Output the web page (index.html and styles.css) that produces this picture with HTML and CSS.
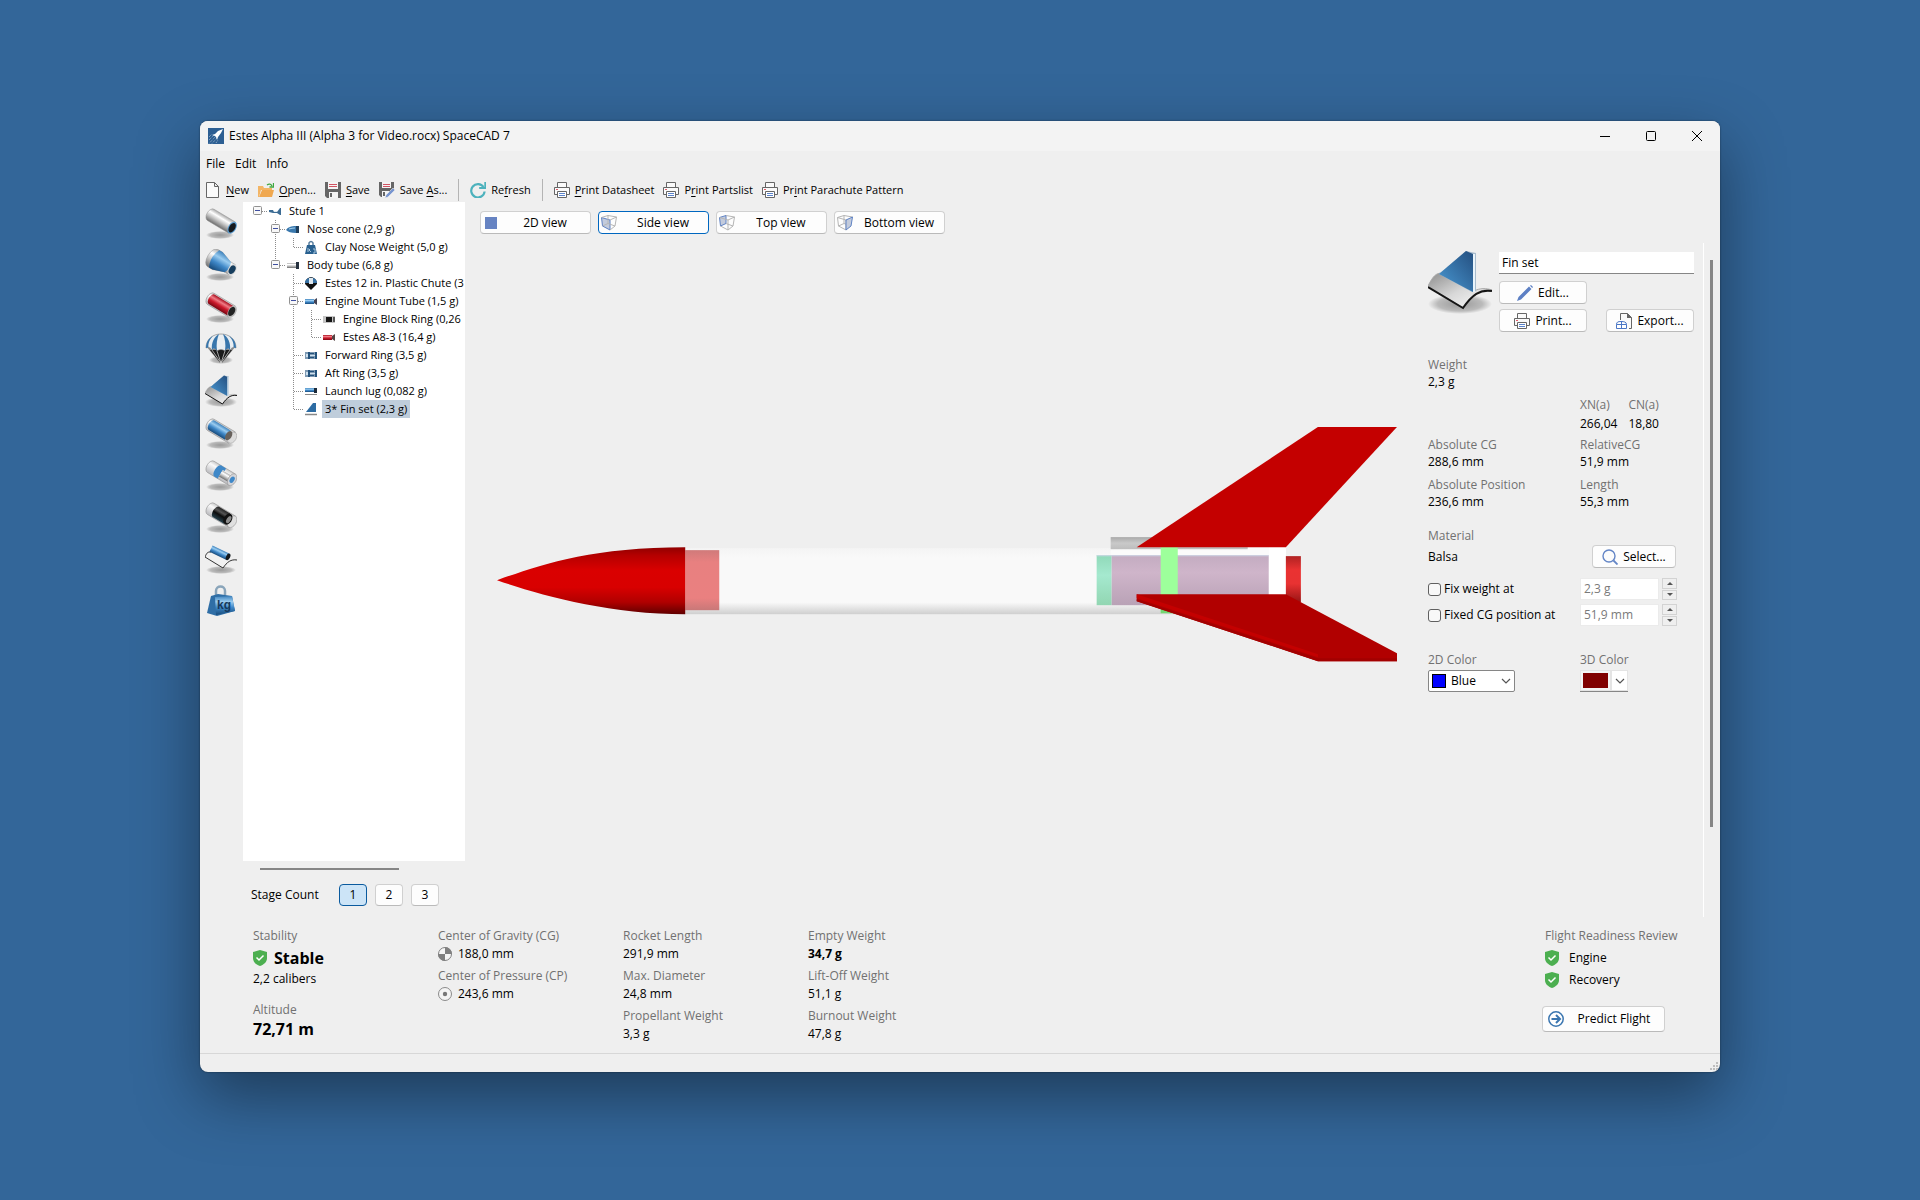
FILE: index.html
```html
<!DOCTYPE html>
<html lang="en">
<head>
<meta charset="utf-8">
<title>Estes Alpha III (Alpha 3 for Video.rocx) SpaceCAD 7</title>
<link rel="stylesheet" href="styles.css">
</head>
<body>
<svg class="sprite" aria-hidden="true">
  <defs>
    <linearGradient id="steel" x1="0" y1="0" x2="0" y2="1"><stop offset="0" stop-color="#a9a9a9"/><stop offset=".3" stop-color="#fff"/><stop offset=".6" stop-color="#c4c4c4"/><stop offset="1" stop-color="#6d6d6d"/></linearGradient>
    <linearGradient id="blue" x1="0" y1="0" x2="0" y2="1"><stop offset="0" stop-color="#3f83bd"/><stop offset=".3" stop-color="#9accf0"/><stop offset=".6" stop-color="#3f88c8"/><stop offset="1" stop-color="#174a7a"/></linearGradient>
    <linearGradient id="crimson" x1="0" y1="0" x2="0" y2="1"><stop offset="0" stop-color="#a80c1c"/><stop offset=".3" stop-color="#ef7c86"/><stop offset=".6" stop-color="#cc1a2c"/><stop offset="1" stop-color="#7a0713"/></linearGradient>
    <linearGradient id="coal" x1="0" y1="0" x2="0" y2="1"><stop offset="0" stop-color="#222"/><stop offset=".3" stop-color="#555"/><stop offset=".55" stop-color="#0c0c0c"/><stop offset="1" stop-color="#27414d"/></linearGradient>
    <linearGradient id="glass" x1="0" y1="0" x2="0" y2="1"><stop offset="0" stop-color="#c9c9c9"/><stop offset=".3" stop-color="#fafafa"/><stop offset="1" stop-color="#b9b9bd"/></linearGradient>
    <linearGradient id="fin" x1="0" y1="1" x2="1" y2="0"><stop offset="0" stop-color="#4a9ad4"/><stop offset="1" stop-color="#244f80"/></linearGradient>
    <linearGradient id="sheet" x1="0" y1="0" x2="1" y2="1"><stop offset="0" stop-color="#8d8d8d"/><stop offset=".5" stop-color="#d8d8d8"/><stop offset="1" stop-color="#fff"/></linearGradient>
    <radialGradient id="shade"><stop offset="0" stop-color="#000" stop-opacity=".36"/><stop offset=".7" stop-color="#000" stop-opacity=".22"/><stop offset="1" stop-color="#000" stop-opacity="0"/></radialGradient>
  </defs>
  <symbol id="app" viewBox="0 0 16 16"><rect width="16" height="16" fill="#2d5f93"/><path d="M1 15.500 8 8M1 12l5-5M4 15.500 9 10M1 9l3-3M8 15l2-3" stroke="#9db4cb" stroke-dasharray="1 1" fill="none"/><path d="M15 1 10 3 7 6l-3 1 3 1 1 1 1 3 1-3 3-4z" fill="#fff"/></symbol>
  <symbol id="new" viewBox="0 0 16 16"><path d="M1.500.5h8l4 4v11h-12zM9.500.5v4h4" fill="#fafafa" stroke="#666"/></symbol>
  <symbol id="open" viewBox="0 0 16 16"><path d="M0 15V4h5l1 2h8v2H3L1 15z" fill="#f3b565"/><path d="M1 15 4 8h12l-2 7z" fill="#f0a850"/><path d="M9 3c2-1.500 4-1 5 1M15.500 1v4h-4" fill="none" stroke="#3fa83f" stroke-width="1.300"/></symbol>
  <symbol id="save" viewBox="0 0 16 16"><path d="M0 0h16v16H2l-2-2z" fill="#666"/><path d="M3 0h10v7H3zM4 10h9v6H4z" fill="#f5f5f5"/><path d="M4 2.500h8M4 4.500h8" stroke="#d25463"/><path d="M5 11h2v4H5z" fill="#666"/></symbol>
  <symbol id="saveas" viewBox="0 0 16 16"><path d="M0 0h15v8L8 15H2l-2-2z" fill="#666"/><path d="M3 0h9v6H3zM3 9h7v4l-2 2H3z" fill="#f5f5f5"/><path d="M4 2.500h7M4 4.500h7" stroke="#d25463"/><path d="M4 10h2v4H4z" fill="#666"/><path d="M6 16l1-3 7-7 2 2-7 7z" fill="#7795d0" stroke="#efefef" stroke-width=".6"/></symbol>
  <symbol id="refresh" viewBox="0 0 16 16"><path d="M13.500 5A6.700 6.700 0 1 0 14.600 9.500" fill="none" stroke="#4db2bd" stroke-width="2.200"/><path d="M15.200 0v6h-6" fill="none" stroke="#4db2bd" stroke-width="1.800"/></symbol>
  <symbol id="print" viewBox="0 0 16 16"><path d="M3.500 5.500v-5h9v5M3.500 12.500h-3v-7h15v7h-3" fill="#fafafa" stroke="#666"/><path d="M3.500 9.500h9v6h-9z" fill="#fff" stroke="#666"/><path d="M5 11.500h6M5 13.500h6" stroke="#5b84cc"/><path d="M2 7.500h2" stroke="#e05a68"/></symbol>
  <symbol id="pencil" viewBox="0 0 16 16"><path d="M0 16l1.500-4L12 1.500l2.500 2.500L4 14.500zM13 .8l1-.8 2 2-.8 1z" fill="#5d80c4"/></symbol>
  <symbol id="export" viewBox="0 0 16 16"><path d="M4.500 7V.5h7l4 4v11H13" fill="#fafafa" stroke="#666"/><path d="M11 0v5h5z" fill="#666"/><path d="M.5 11.500h10v4H.5zM5.500 8v7.500M.5 11.500C.5 9 2 8.500 5 8.500c3 0 5.500.5 5.500 3" fill="#fff" stroke="#4a76c6"/></symbol>
  <symbol id="search" viewBox="0 0 16 16"><circle cx="7" cy="7" r="6" fill="#fcfcfc" stroke="#6486c6" stroke-width="1.400"/><path d="M11.500 11.500 15.500 15.500" stroke="#6486c6" stroke-width="1.800"/></symbol>
  <symbol id="cube-side" viewBox="0 0 16 16"><path d="M.5 2.500 9 5v10L1.500 11z" fill="#c3cbdc" stroke="#5f82c4"/><path d="M.5 2.500 7 .5l8.500 1.500L9 5M15.500 2 14 11l-5 4M7 .5v8l7 2.500M7 8.500 1.500 11" fill="none" stroke="#b5b5b5"/></symbol>
  <symbol id="cube-top" viewBox="0 0 16 16"><path d="M.5 2.500 7 .5v8L1.500 11z" fill="#c3cbdc" stroke="#5f82c4"/><path d="M.5 2.500 9 5v10L1.500 11M7 .5l8.500 1.500L9 5M15.500 2 14 11l-5 4M7 8.500l7 2.500" fill="none" stroke="#b5b5b5"/></symbol>
  <symbol id="cube-bottom" viewBox="0 0 16 16"><path d="M.5 2.500 9 5v10L1.500 11zM.5 2.500 7 .5l8.500 1.500M7 .5v8l7 2.500M7 8.500 1.500 11" fill="none" stroke="#b5b5b5"/><path d="M15.500 2 14 11l-5 4V5z" fill="#c3cbdc" stroke="#5f82c4"/></symbol>
  <symbol id="shield" viewBox="0 0 14 16"><path d="M7 0 14 2v6c0 4-3 6.500-7 8-4-1.500-7-4-7-8V2z" fill="#4caf50"/><path d="M3.500 7.500 6 10l4.500-4.500" fill="none" stroke="#fff" stroke-width="1.500"/></symbol>
  <symbol id="cg" viewBox="0 0 14 14"><circle cx="7" cy="7" r="6.500" fill="#f6f6f6" stroke="#808080"/><path d="M7 7V0a7 7 0 0 1 7 7zM7 7v7a7 7 0 0 1-7-7z" fill="#808080"/></symbol>
  <symbol id="cp" viewBox="0 0 14 14"><circle cx="7" cy="7" r="6.500" fill="#f4f4f4" stroke="#8a8a8a"/><circle cx="7" cy="7" r="2.200" fill="#777"/></symbol>
  <symbol id="go" viewBox="0 0 16 16"><circle cx="8" cy="8" r="7.200" fill="#fff" stroke="#3b76b0" stroke-width="1.500"/><path d="M3.500 8h8M8 4l4 4-4 4" fill="none" stroke="#3b76b0" stroke-width="2"/></symbol>
  <symbol id="chevron" viewBox="0 0 10 6"><path d="M1 1l4 4 4-4" fill="none" stroke="#555" stroke-width="1.200"/></symbol>

  <symbol id="tube" viewBox="0 0 32 32"><ellipse cx="15" cy="28" rx="14" ry="4" fill="url(#shade)"/><g transform="translate(16 14) rotate(31)"><path d="M-12-6.500h25v13h-25a4 6.500 0 0 1 0-13z" fill="url(#steel)" stroke="#999" stroke-width=".5"/><ellipse cx="13" rx="4" ry="6.500" fill="#5f9fd2"/><ellipse cx="13" rx="3" ry="5.200" fill="#15191d"/></g></symbol>
  <symbol id="adapter" viewBox="0 0 32 32"><ellipse cx="15" cy="28" rx="14" ry="4" fill="url(#shade)"/><g transform="translate(16 14) rotate(31)"><path d="M-10-10h6l11 4h6v12H7l-11 4h-6a5 10 0 0 1 0-20z" fill="url(#steel)" stroke="#999" stroke-width=".5"/><path d="M-8-10h4L8-6q3 6 0 12l-12 4h-4q-5-10 0-20z" fill="url(#blue)"/><ellipse cx="13" rx="4" ry="6" fill="#d8d8d8"/><ellipse cx="13" rx="3" ry="4.600" fill="#173e5e"/></g></symbol>
  <symbol id="engine" viewBox="0 0 32 32"><ellipse cx="15" cy="28" rx="14" ry="4" fill="url(#shade)"/><g transform="translate(16 14) rotate(31)"><path d="M-12-6.500h25v13h-25a4 6.500 0 0 1 0-13z" fill="url(#glass)" stroke="#999" stroke-width=".6"/><path d="M-11-5.500h22v11h-22a3 5.500 0 0 1 0-11z" fill="url(#crimson)"/><ellipse cx="13" rx="4" ry="6.500" fill="#bbb"/><ellipse cx="12.500" rx="3" ry="5" fill="#222"/></g></symbol>
  <symbol id="chute" viewBox="0 0 32 32"><ellipse cx="16" cy="27" rx="12" ry="4" fill="url(#shade)"/><path d="M1 13 15 30h2l14-17z" fill="#8a8a8a"/><path d="M5 17 15.500 30h1L27 17z" fill="#1b1b1b"/><path d="M7 17l9 13 9-13M12 18l4 12 4-12" fill="none" stroke="#ddd" stroke-width=".7"/><path d="M1 15C1 6 8 1 16 1s15 5 15 14c-2-1-4-1-6 2-3-2-4-2-5 1-3-2-5-2-8 0-1-3-2-3-5-1-2-3-4-3-6-2z" fill="#e9eef2" stroke="#777" stroke-width=".6"/><path d="M1 15C1 9 4 5 8 3 4 7 3 11 3.500 14.500zM7 17C6 10 9 4 14 1c-2 5-3 10-2 17-2-3-3-3-5-1zM25 17c1-7-2-13-7-16 2 5 3 10 2 17 2-3 3-3 5-1zM31 15c0-6-3-10-7-12 4 4 5 8 4.500 11.500z" fill="#3876ac"/></symbol>
  <symbol id="finset" viewBox="0 0 64 64"><ellipse cx="32" cy="54" rx="32" ry="10" fill="url(#shade)"/><path d="M0 36C5 26 8 23 14 23L46 41c6-3 12-3 18-1-12-2-20 5-29 18z" fill="url(#sheet)" stroke="#aaa"/><path d="M0 37l35 21c9-13 17-19 29-17" fill="none" stroke="#151515" stroke-width="2"/><path d="M11 24 38 1l10 2v38l-4 1z" fill="#a8bccd"/><path d="M11 24 38 1l7 3v38z" fill="url(#fin)"/><path d="M46 4v38" stroke="#e9f4fb" stroke-width="2"/></symbol>
  <symbol id="coupler" viewBox="0 0 32 32"><ellipse cx="15" cy="28" rx="14" ry="4" fill="url(#shade)"/><g transform="translate(16 14) rotate(31)"><path d="M-12-6.500h25v13h-25a4 6.500 0 0 1 0-13z" fill="url(#glass)" stroke="#999" stroke-width=".6"/><path d="M-11-5.500H8v11h-19a3 5.500 0 0 1 0-11z" fill="url(#blue)"/><ellipse cx="13" rx="4" ry="6" fill="#dcdcdc" stroke="#aaa" stroke-width=".6"/><ellipse cx="9" rx="3" ry="5" fill="#67615c"/></g></symbol>
  <symbol id="rings" viewBox="0 0 32 32"><ellipse cx="15" cy="28" rx="14" ry="4" fill="url(#shade)"/><g transform="translate(16 14) rotate(31)"><path d="M-12-6.500h25v13h-25a4 6.500 0 0 1 0-13z" fill="url(#glass)" stroke="#999" stroke-width=".6"/><path d="M-4-6.500h6v3H0v10h-4a3 6.500 0 0 1 0-13z" fill="#3f88c8"/><path d="M0-3h13v7H0z" fill="url(#steel)"/><ellipse cx="13" rx="4" ry="6.500" fill="#d4d4d8" stroke="#999" stroke-width=".6"/><ellipse cx="13" rx="2.200" ry="3.500" fill="#3f88c8"/></g></symbol>
  <symbol id="block" viewBox="0 0 32 32"><ellipse cx="15" cy="28" rx="14" ry="4" fill="url(#shade)"/><g transform="translate(16 14) rotate(31)"><path d="M-12-6.500h25v13h-25a4 6.500 0 0 1 0-13z" fill="url(#glass)" stroke="#999" stroke-width=".6"/><path d="M-6-6H7V6H-6a3 6 0 0 1 0-12z" fill="url(#coal)"/><ellipse cx="13" rx="4" ry="6.500" fill="#e0e0e0" stroke="#999" stroke-width=".6"/><ellipse cx="8" rx="4" ry="6" fill="#111"/><ellipse cx="9" rx="2" ry="4" fill="#8c8c8c"/></g></symbol>
  <symbol id="lug" viewBox="0 0 32 32"><ellipse cx="16" cy="27" rx="15" ry="4" fill="url(#shade)"/><path d="M0 14c2-5 4-6 6-5l18 8c3-1 5-1 8 0-6-1-10 3-14 8z" fill="#f1f1f1"/><path d="M0 14l18 11c4-6 8-9 14-8M0 14c2-5 3-5 6-5" fill="none" stroke="#333"/><g transform="translate(15 10) rotate(26)"><path d="M-10-3.500H9v7h-19z" fill="url(#blue)"/><ellipse cx="9" rx="2" ry="3.500" fill="#15191d"/></g></symbol>

  <symbol id="t-stage" viewBox="0 0 14 14"><path d="M1 6h4l1 2h3l3-4h1v7h-1L9 9H5L1 8z" fill="#3c6c94"/><path d="M6 7h3v1H6z" fill="#dde9f1"/></symbol>
  <symbol id="t-nose" viewBox="0 0 14 14"><path d="M0 8c2-3 5-4 10-4v7C5 11 2 10 0 8z" fill="#3a78ad"/><path d="M10 4h3v7h-3z" fill="#1f3f5c"/><path d="M3 7q3-1 6-1" stroke="#a5d2ef" fill="none"/></symbol>
  <symbol id="t-weight" viewBox="0 0 14 14"><path d="M5 5V3q2-3 4 0v2" fill="none" stroke="#5a7f9f" stroke-width="1.500"/><path d="M3 5h8l2 9H1z" fill="#28608f"/><path d="M4 8v4M6 9l-1 1 2 2M9 9h2v4H9" stroke="#a9c6dd" fill="none"/></symbol>
  <symbol id="t-body" viewBox="0 0 14 14"><path d="M1 5h9v5H1z" fill="url(#steel)"/><path d="M10 4h3v7h-3z" fill="#26323f"/></symbol>
  <symbol id="t-chute" viewBox="0 0 14 14"><path d="M1 8c0-9 12-9 12 0l-6 6z" fill="#111"/><path d="M1 7c0-7 12-7 12 0z" fill="#3772a5"/><path d="M5 2h4v6H5z" fill="#dfe8ef"/></symbol>
  <symbol id="t-mount" viewBox="0 0 14 14"><path d="M1 5h9v5H1z" fill="url(#blue)"/><path d="M10 6l3-2v7l-3-2z" fill="#445"/></symbol>
  <symbol id="t-block" viewBox="0 0 14 14"><path d="M1 4h12v7H1z" fill="#c5c5c5"/><path d="M4 5h6v5H4z" fill="#151515"/><path d="M11 5h2v5h-2z" fill="#555"/></symbol>
  <symbol id="t-engine" viewBox="0 0 14 14"><path d="M1 5h9v5H1z" fill="url(#crimson)"/><path d="M10 6l3-2v7l-3-2z" fill="#544"/></symbol>
  <symbol id="t-ring" viewBox="0 0 14 14"><path d="M1 4h12v7H1z" fill="#7f9ab3"/><path d="M2 6h2v3H2zM6 7h5v1H6z" fill="#cfe2f0"/><path d="M4 4h2v7H4zM6 5h4v1H6zM6 9h4v1H6zM11 4h2v7h-2z" fill="#23527c"/></symbol>
  <symbol id="t-lug" viewBox="0 0 14 14"><path d="M1 4h10v4H1z" fill="url(#blue)"/><path d="M10 4h3v5h-3z" fill="#1c2b3a"/><path d="M1 10.500h12" stroke="#888"/></symbol>
  <symbol id="t-fin" viewBox="0 0 14 14"><path d="M2 10 9 1h3v9z" fill="#2d6ca3"/><path d="M1 12.500h12" stroke="#888" stroke-width="1.500"/></symbol>

  <symbol id="g-line" viewBox="0 0 18 18"><path d="M8.500 0v18" class="dots"/></symbol>
  <symbol id="g-tee" viewBox="0 0 18 18"><path d="M8.500 0v18M9 9.500h9" class="dots"/></symbol>
  <symbol id="g-end" viewBox="0 0 18 18"><path d="M8.500 0v9M9 9.500h9" class="dots"/></symbol>
  <symbol id="g-box" viewBox="0 0 18 18"><path d="M13 9.500h5" class="dots"/><rect x="4.500" y="4.500" width="8" height="8" rx="1" fill="#f8f8f8" stroke="#919191"/><path d="M6 8.500h5" stroke="#3f4fa0"/></symbol>
  <symbol id="g-boxmid" viewBox="0 0 18 18"><path d="M8.500 0v18" class="dots"/><use href="#g-box" width="18" height="18"/></symbol>
  <symbol id="g-boxend" viewBox="0 0 18 18"><path d="M8.500 0v5" class="dots"/><use href="#g-box" width="18" height="18"/></symbol>
</svg>

<main class="window">
  <header class="titlebar">
    <svg class="i16"><use href="#app"/></svg>
    <h1>Estes Alpha III (Alpha 3 for Video.rocx) SpaceCAD 7</h1>
    <div class="caption">
      <button aria-label="Minimize"><svg class="i10" viewBox="0 0 10 10"><path d="M0 5.500h10" stroke="#000"/></svg></button>
      <button aria-label="Maximize"><svg class="i10" viewBox="0 0 10 10"><rect x=".5" y=".5" width="9" height="9" rx="1" fill="none" stroke="#000"/></svg></button>
      <button aria-label="Close"><svg class="i10" viewBox="0 0 10 10"><path d="M0 0l10 10M10 0 0 10" stroke="#000"/></svg></button>
    </div>
  </header>
  <nav class="menubar"><button>File</button><button>Edit</button><button>Info</button></nav>
  <div class="toolbar">
    <button><svg class="i16"><use href="#new"/></svg><span><u>N</u>ew</span></button>
    <button><svg class="i16"><use href="#open"/></svg><span><u>O</u>pen...</span></button>
    <button><svg class="i16"><use href="#save"/></svg><span><u>S</u>ave</span></button>
    <button><svg class="i16"><use href="#saveas"/></svg><span>Save <u>A</u>s...</span></button>
    <span class="sep"></span>
    <button><svg class="i16"><use href="#refresh"/></svg><span>Re<u>f</u>resh</span></button>
    <span class="sep"></span>
    <button><svg class="i16"><use href="#print"/></svg><span><u>P</u>rint Datasheet</span></button>
    <button><svg class="i16"><use href="#print"/></svg><span>P<u>r</u>int Partslist</span></button>
    <button><svg class="i16"><use href="#print"/></svg><span>Pr<u>i</u>nt Parachute Pattern</span></button>
  </div>

  <div class="workspace">
    <div class="rail">
      <button aria-label="Body tube"><svg><use href="#tube"/></svg></button>
      <button aria-label="Adapter"><svg><use href="#adapter"/></svg></button>
      <button aria-label="Engine"><svg><use href="#engine"/></svg></button>
      <button aria-label="Parachute"><svg><use href="#chute"/></svg></button>
      <button aria-label="Fin set"><svg><use href="#finset"/></svg></button>
      <button aria-label="Coupler"><svg><use href="#coupler"/></svg></button>
      <button aria-label="Centering rings"><svg><use href="#rings"/></svg></button>
      <button aria-label="Engine block"><svg><use href="#block"/></svg></button>
      <button aria-label="Launch lug"><svg><use href="#lug"/></svg></button>
      <button aria-label="Weight"><svg viewBox="0 0 32 32"><path d="M11 10V6c0-6 9-6 9 0v4" fill="none" stroke="#8aa5ba" stroke-width="2.500"/><path d="M6 11 13 9l14 2 3 15-18 5-10-3z" fill="#2f6ea6"/><path d="M10 12l17-1 3 15-19 4z" fill="url(#blue)"/><text x="12" y="24" class="kg">kg</text></svg></button>
    </div>

    <div class="outline">
      <ul class="tree">
        <li><svg class="g"><use href="#g-box"/></svg><svg class="t"><use href="#t-stage"/></svg><span>Stufe 1</span></li>
        <li><i></i><svg class="g"><use href="#g-boxmid"/></svg><svg class="t"><use href="#t-nose"/></svg><span>Nose cone (2,9 g)</span></li>
        <li><i></i><svg class="g"><use href="#g-line"/></svg><svg class="g"><use href="#g-end"/></svg><svg class="t"><use href="#t-weight"/></svg><span>Clay Nose Weight (5,0 g)</span></li>
        <li><i></i><svg class="g"><use href="#g-boxend"/></svg><svg class="t"><use href="#t-body"/></svg><span>Body tube (6,8 g)</span></li>
        <li><i></i><i></i><svg class="g"><use href="#g-tee"/></svg><svg class="t"><use href="#t-chute"/></svg><span>Estes 12 in. Plastic Chute (3</span></li>
        <li><i></i><i></i><svg class="g"><use href="#g-boxmid"/></svg><svg class="t"><use href="#t-mount"/></svg><span>Engine Mount Tube (1,5 g)</span></li>
        <li><i></i><i></i><svg class="g"><use href="#g-line"/></svg><svg class="g"><use href="#g-tee"/></svg><svg class="t"><use href="#t-block"/></svg><span>Engine Block Ring (0,26</span></li>
        <li><i></i><i></i><svg class="g"><use href="#g-line"/></svg><svg class="g"><use href="#g-end"/></svg><svg class="t"><use href="#t-engine"/></svg><span>Estes A8-3 (16,4 g)</span></li>
        <li><i></i><i></i><svg class="g"><use href="#g-tee"/></svg><svg class="t"><use href="#t-ring"/></svg><span>Forward Ring (3,5 g)</span></li>
        <li><i></i><i></i><svg class="g"><use href="#g-tee"/></svg><svg class="t"><use href="#t-ring"/></svg><span>Aft Ring (3,5 g)</span></li>
        <li><i></i><i></i><svg class="g"><use href="#g-tee"/></svg><svg class="t"><use href="#t-lug"/></svg><span>Launch lug (0,082 g)</span></li>
        <li><i></i><i></i><svg class="g"><use href="#g-end"/></svg><svg class="t"><use href="#t-fin"/></svg><span class="selected">3* Fin set (2,3 g)</span></li>
      </ul>
      <div class="hscroll"><div class="thumb"></div></div>
      <div class="stages">
        <span>Stage Count</span>
        <button class="btn on">1</button><button class="btn">2</button><button class="btn">3</button>
      </div>
    </div>

    <section class="view">
      <div class="tabs">
        <button class="btn"><span class="square"></span><b>2D view</b></button>
        <button class="btn current"><svg class="i16"><use href="#cube-side"/></svg><b>Side view</b></button>
        <button class="btn"><svg class="i16"><use href="#cube-top"/></svg><b>Top view</b></button>
        <button class="btn"><svg class="i16"><use href="#cube-bottom"/></svg><b>Bottom view</b></button>
      </div>
      <div class="canvas">
        <svg viewBox="0 0 900 234" role="img" aria-label="Rocket side view">
          <defs>
            <linearGradient id="cone" x1="0" y1="0" x2="0" y2="1"><stop offset="0" stop-color="#900000"/><stop offset=".12" stop-color="#b40000"/><stop offset=".35" stop-color="#da0000"/><stop offset=".6" stop-color="#d80000"/><stop offset=".82" stop-color="#b00000"/><stop offset="1" stop-color="#600000"/></linearGradient>
            <linearGradient id="hull" x1="0" y1="0" x2="0" y2="1"><stop offset="0" stop-color="#f4f4f4"/><stop offset=".15" stop-color="#f9f9f9"/><stop offset=".82" stop-color="#f9f9f9"/><stop offset="1" stop-color="#cfcfcf"/></linearGradient>
            <linearGradient id="collar" x1="0" y1="0" x2="0" y2="1"><stop offset="0" stop-color="#d07a7a"/><stop offset=".2" stop-color="#e88080"/><stop offset=".8" stop-color="#ea8080"/><stop offset="1" stop-color="#c87878"/></linearGradient>
            <linearGradient id="mount" x1="0" y1="0" x2="0" y2="1"><stop offset="0" stop-color="#c3acc1"/><stop offset=".35" stop-color="#cfb5ca"/><stop offset="1" stop-color="#b9a2b6"/></linearGradient>
            <linearGradient id="mint" x1="0" y1="0" x2="0" y2="1"><stop offset="0" stop-color="#90d9b9"/><stop offset=".4" stop-color="#a5e9cf"/><stop offset="1" stop-color="#92d6b2"/></linearGradient>
            <linearGradient id="motor" x1="0" y1="0" x2="0" y2="1"><stop offset="0" stop-color="#b02222"/><stop offset=".3" stop-color="#ea3232"/><stop offset=".6" stop-color="#e83232"/><stop offset="1" stop-color="#981414"/></linearGradient>
            <linearGradient id="rod" x1="0" y1="0" x2="0" y2="1"><stop offset="0" stop-color="#a9a9a9"/><stop offset=".5" stop-color="#c9c9c9"/><stop offset="1" stop-color="#bdbdbd"/></linearGradient>
          </defs>
          <rect x="188" y="121" width="600" height="66" fill="url(#hull)"/>
          <rect x="188" y="123" width="34" height="60" fill="url(#collar)"/>
          <path d="M0 153C40 139 90 120 188 120v67C110 187 40 167 0 153z" fill="url(#cone)"/>
          <rect x="613" y="110" width="137" height="12" fill="url(#rod)"/>
          <path d="M750 120h38v50h-38zM613 123h137v5H613z" fill="#fbfbfb"/>
          <rect x="599" y="128" width="15" height="50" fill="url(#mint)"/>
          <rect x="614" y="128" width="157" height="50" fill="url(#mount)"/>
          <path d="M599 128.500h172" stroke="#cdd6e6"/>
          <rect x="663" y="120" width="17" height="66" fill="#9dff9b"/>
          <path d="M663 181h17v5h-17z" fill="#74d672"/>
          <rect x="771" y="120" width="17" height="50" fill="#fff"/>
          <rect x="788" y="129" width="15" height="46" fill="url(#motor)"/>
          <path d="M639 120 820 0h79L788 120z" fill="#c40000"/>
          <path d="M639 167h149l111 59v8h-79L639 174z" fill="#b10000"/>
          <path d="M639 167 820 227v3L639 171z" fill="#c40000"/>
          <path d="M639 172 820 231h79v3h-79L639 174z" fill="#a30000"/>
        </svg>
      </div>
    </section>

    <aside class="props">
      <div class="fields">
        <div class="head">
          <svg class="i64"><use href="#finset"/></svg>
          <div class="headgrid">
            <input class="name" type="text" value="Fin set" aria-label="Name">
            <button class="btn"><svg class="i16"><use href="#pencil"/></svg>Edit...</button>
            <button class="btn left"><svg class="i16"><use href="#print"/></svg>Print...</button>
            <button class="btn right"><svg class="i16"><use href="#export"/></svg>Export...</button>
          </div>
        </div>
        <dl class="pair"><div><dt>Weight</dt><dd>2,3 g</dd></div></dl>
        <dl class="coef"><div><dt>XN(a)</dt><dd>266,04</dd></div><div><dt>CN(a)</dt><dd>18,80</dd></div></dl>
        <dl class="pair">
          <div><dt>Absolute CG</dt><dd>288,6 mm</dd></div><div><dt>RelativeCG</dt><dd>51,9 mm</dd></div>
          <div><dt>Absolute Position</dt><dd>236,6 mm</dd></div><div><dt>Length</dt><dd>55,3 mm</dd></div>
        </dl>
        <div class="material">
          <p>Material</p>
          <div class="row"><span>Balsa</span><button class="btn"><svg class="i16"><use href="#search"/></svg>Select...</button></div>
        </div>
        <div class="fixed">
          <label><input type="checkbox">Fix weight at</label>
          <div class="spin"><input type="text" value="2,3 g" disabled aria-label="Fixed weight"><span><button aria-label="Increase" disabled></button><button class="down" aria-label="Decrease" disabled></button></span></div>
          <label><input type="checkbox">Fixed CG position at</label>
          <div class="spin"><input type="text" value="51,9 mm" disabled aria-label="Fixed CG position"><span><button aria-label="Increase" disabled></button><button class="down" aria-label="Decrease" disabled></button></span></div>
        </div>
        <div class="colors">
          <div><label for="c2">2D Color</label>
            <div class="combo"><span class="swatch"></span><select id="c2"><option>Blue</option></select><svg class="chev"><use href="#chevron"/></svg></div></div>
          <div><label for="c3">3D Color</label>
            <div class="picker"><input id="c3" type="color" value="#800000"><button aria-label="More colors"><svg class="chev"><use href="#chevron"/></svg></button></div></div>
        </div>
      </div>
      <div class="vscroll"><div class="thumb"></div></div>
    </aside>
  </div>

  <footer class="stats">
    <div class="stability">
      <p class="label">Stability</p>
      <p class="big"><svg class="shield"><use href="#shield"/></svg>Stable</p>
      <p>2,2 calibers</p>
      <p class="label alt">Altitude</p>
      <p class="big">72,71 m</p>
    </div>
    <dl>
      <div><dt>Center of Gravity (CG)</dt><dd><svg class="i14"><use href="#cg"/></svg>188,0 mm</dd></div>
      <div><dt>Center of Pressure (CP)</dt><dd><svg class="i14"><use href="#cp"/></svg>243,6 mm</dd></div>
    </dl>
    <dl>
      <div><dt>Rocket Length</dt><dd>291,9 mm</dd></div>
      <div><dt>Max. Diameter</dt><dd>24,8 mm</dd></div>
      <div><dt>Propellant Weight</dt><dd>3,3 g</dd></div>
    </dl>
    <dl>
      <div><dt>Empty Weight</dt><dd><strong>34,7 g</strong></dd></div>
      <div><dt>Lift-Off Weight</dt><dd>51,1 g</dd></div>
      <div><dt>Burnout Weight</dt><dd>47,8 g</dd></div>
    </dl>
    <div class="review">
      <p class="label">Flight Readiness Review</p>
      <p class="check"><svg class="shield"><use href="#shield"/></svg>Engine</p>
      <p class="check"><svg class="shield"><use href="#shield"/></svg>Recovery</p>
      <button class="btn predict"><svg class="i16"><use href="#go"/></svg><b>Predict Flight</b></button>
    </div>
  </footer>
  <div class="statusbar"><svg class="grip" viewBox="0 0 8 8"><path d="M6 0h2v2H6zM3 3h2v2H3zM6 3h2v2H6zM0 6h2v2H0zM3 6h2v2H3zM6 6h2v2H6z" fill="#bdbdbd"/></svg></div>
</main>
</body>
</html>
```
FILE: styles.css
```css
* { box-sizing: border-box; }
body {
  margin: 0;
  min-height: 100vh;
  padding: 121px 200px 128px;
  display: flex;
  background: #336699;
  color: #000;
  font: 12px/16px "Open Sans", "Noto Sans", sans-serif;
}
h1, p, dl, dd, ul { margin: 0; padding: 0; }
button, input, select { font: inherit; color: inherit; margin: 0; }
button { padding: 0; border: 0; background: none; white-space: nowrap; }
b { font-weight: 400; }
svg { display: block; flex: none; }
.sprite { position: absolute; width: 0; height: 0; }
.dots { fill: none; stroke: #8c8c8c; stroke-dasharray: 1 1; }
.kg { font: bold 12px "Liberation Sans", sans-serif; fill: #16395c; }
.i10 { width: 10px; height: 10px; }
.i14 { width: 14px; height: 14px; }
.i16 { width: 16px; height: 16px; }
.i64 { width: 64px; height: 64px; }
.shield { width: 14px; height: 16px; }

.window {
  flex: 1;
  min-width: 0;
  display: flex;
  flex-direction: column;
  overflow: hidden;
  border-radius: 8px;
  background: #efefef;
  box-shadow: 0 0 2px rgba(0, 0, 0, .5), 0 24px 64px rgba(0, 0, 0, .42);
}
.titlebar { display: flex; align-items: center; gap: 5px; height: 30px; padding-left: 8px; background: #f3f3f3; }
.titlebar h1 { font-size: 12px; font-weight: 400; }
.caption { margin-left: auto; display: flex; }
.caption button { width: 46px; height: 30px; display: grid; place-items: center; }
.menubar { display: flex; gap: 10px; padding: 5px 6px; }
.toolbar { display: flex; align-items: center; gap: 9px; height: 25px; padding-left: 5px; font-size: 11px; }
.toolbar button { display: flex; align-items: center; gap: 5px; }
.sep { width: 1px; height: 22px; margin: 0 2px; background: #b4b4b4; }
u { text-underline-offset: 2px; }

.btn {
  display: flex;
  align-items: center;
  justify-content: center;
  gap: 5px;
  height: 23px;
  border: 1px solid #d0d0d0;
  border-bottom-color: #bababa;
  border-radius: 4px;
  background: #fdfdfd;
}

.workspace { flex: 1; display: flex; min-height: 0; }
.rail { width: 43px; padding: 5px 5px 0; display: flex; flex-direction: column; gap: 10px; }
.rail svg { width: 32px; height: 32px; }

.outline { width: 222px; display: flex; flex-direction: column; }
.tree { flex: 1; padding-left: 6px; overflow: hidden; list-style: none; background: #fff; font-size: 11px; }
.tree li { display: flex; height: 18px; align-items: center; white-space: nowrap; }
.tree i, .g { flex: none; width: 18px; height: 18px; }
.t { width: 14px; height: 14px; margin: 0 4px 0 1px; }
.tree span { padding: 0 3px; line-height: 18px; }
.tree .selected { background: #bfcddb; }
.hscroll { padding: 7px 66px 14px 17px; }
.hscroll .thumb { height: 2px; background: #868686; }
.stages { display: flex; align-items: center; padding: 0 0 11px 8px; gap: 8px; }
.stages span { width: 80px; }
.stages .btn { width: 28px; height: 22px; }
.stages .on { border-color: #0a5a9e; background: #cce4f7; }

.view { flex: 1; min-width: 0; display: flex; flex-direction: column; padding: 9px 15px 62px; }
.tabs { display: flex; gap: 7px; }
.tabs .btn { width: 111px; justify-content: flex-start; padding-left: 2px; }
.tabs b { flex: 1; text-align: center; padding-right: 4px; }
.tabs .current { border-color: #0067c0; }
.square { width: 12px; height: 12px; margin: 0 2px; background: #6683c2; }
.canvas { flex: 1; display: grid; place-items: center; padding: 0 15px 0 17px; }
.canvas svg { width: 100%; height: auto; }

.props { width: 292px; display: flex; padding: 41px 0 0; }
.fields { flex: 1; padding: 7px 9px 0 0; border-right: 1px solid #fff; }
.vscroll { width: 16px; padding: 17px 7px 90px 6px; }
.vscroll .thumb { height: 100%; background: #868686; }
.head { display: flex; gap: 7px; margin-bottom: 25px; }
.headgrid { flex: 1; display: grid; grid-template-columns: 88px 88px; justify-content: space-between; gap: 5px 0; padding-top: 2px; }
.headgrid input { grid-column: 1 / 3; margin-bottom: 2px; }
.headgrid .left { grid-column: 1; }
.name { height: 22px; padding: 0 3px; border: 0; border-bottom: 1px solid #868686; background: #fff; width: 100%; }
dt, .label, .material p, .colors label { color: #717171; }
.pair { display: grid; grid-template-columns: 152px 1fr; gap: 7px 0; }
.pair dt { padding-bottom: 1px; }
.coef { display: flex; gap: 11px; padding: 7px 0 5px 152px; }
.coef dt { padding-bottom: 3px; }
.material { padding-top: 18px; }
.material .row { display: flex; align-items: center; justify-content: space-between; padding: 1px 18px 0 0; }
.material .btn { width: 84px; }
.fixed { display: grid; grid-template-columns: 152px 1fr; gap: 4px 0; padding: 10px 0 0; align-items: center; }
.fixed label { display: flex; align-items: center; gap: 3px; white-space: nowrap; }
.fixed label input { appearance: none; width: 13px; height: 13px; border: 1px solid #606060; border-radius: 3px; background: #f8f8f8; }
.spin { display: flex; gap: 3px; height: 22px; }
.spin input { width: 79px; padding: 0 3px; border: 1px solid #ebebeb; background: #fff; color: #7a7a7a; }
.spin span { display: grid; gap: 1px; width: 15px; }
.spin button { display: grid; place-items: center; border: 1px solid #d3d3d3; }
.spin button::before { content: ""; border: 3px solid transparent; border-top: 0; border-bottom-color: #555; }
.spin .down::before { border-top: 3px solid #555; border-bottom: 0; }
.colors { display: grid; grid-template-columns: 152px 1fr; padding-top: 26px; }
.colors label { display: block; padding-bottom: 2px; }
.combo, .picker { display: grid; align-items: center; height: 22px; }
.combo { width: 87px; }
.combo > * { grid-row: 1; grid-column: 1; }
.combo select { appearance: none; width: 100%; height: 22px; padding: 0 22px; border: 1px solid #868686; border-radius: 2px; background: #fff; }
.swatch { z-index: 1; width: 14px; height: 14px; margin-left: 4px; border: 1px solid #000; background: #00f; }
.chev { width: 10px; height: 6px; justify-self: end; }
.combo .chev { margin-right: 4px; }
.picker { grid-template-columns: 31px 17px; justify-content: start; border-bottom: 1px solid #868686; width: 48px; }
.picker input { appearance: none; width: 31px; height: 21px; padding: 2px; border: 1px solid #e4e4e4; background: #f3f3f3; }
.picker input::-webkit-color-swatch-wrapper { padding: 0; }
.picker input::-webkit-color-swatch { border: 0; }
.picker button { height: 21px; display: grid; place-content: center; background: #fff; border: 1px solid #e4e4e4; }

.stats { display: flex; height: 136px; padding: 11px 0 0 53px; }
.stats > * { width: 185px; }
.stats dt { padding-bottom: 2px; }
.stats dl div { padding-bottom: 6px; }
.stats dd { display: flex; align-items: center; gap: 6px; }
.big { display: flex; align-items: center; gap: 7px; padding: 4px 0 3px; font-size: 16px; line-height: 20px; font-weight: 700; }
.alt { padding-top: 15px; }
.alt + .big { padding: 1px 0 0; }
.stats .review { width: 175px; margin-left: auto; }
.check { display: flex; align-items: center; gap: 10px; padding-top: 6px; }
.predict { width: 123px; height: 26px; margin: 18px 0 0 -3px; padding: 0 5px; }
.predict b { flex: 1; text-align: center; }
.statusbar { display: flex; justify-content: flex-end; align-items: flex-end; height: 19px; padding: 0 2px 2px; border-top: 1px solid #d7d7d7; }
.grip { width: 8px; height: 8px; }
```
